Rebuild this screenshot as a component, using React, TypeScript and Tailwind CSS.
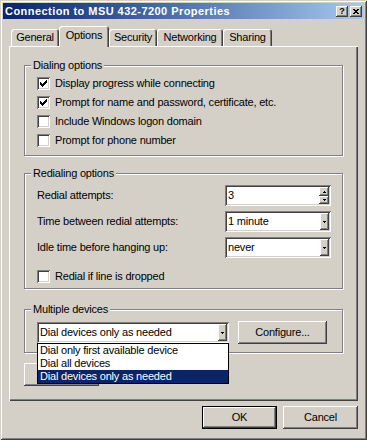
import React from 'react';

const raised =
  'shadow-[inset_-1px_-1px_#404040,inset_1px_1px_#fff,inset_-2px_-2px_#808080,inset_2px_2px_#d4d0c8]';
const sunken =
  'shadow-[inset_1px_1px_#808080,inset_-1px_-1px_#fff,inset_2px_2px_#404040,inset_-2px_-2px_#d4d0c8]';

const Check = ({ checked }: { checked?: boolean }) => (
  <div className={`w-[13px] h-[13px] shrink-0 bg-white flex items-center justify-center ${sunken}`}>
    {checked && (
      <svg width="7" height="7" viewBox="0 0 7 7" shapeRendering="crispEdges">
        <path
          fill="#000"
          d="M0 2h1v3H0z M1 3h1v3H1z M2 4h1v3H2z M3 3h1v3H3z M4 2h1v3H4z M5 1h1v3H5z M6 0h1v3H6z"
        />
      </svg>
    )}
  </div>
);

const CheckRow = ({ label, checked }: { label: string; checked?: boolean }) => (
  <div className="flex items-center h-[19px] pl-[12px]">
    <Check checked={checked} />
    <span className="ml-[5px] whitespace-nowrap">{label}</span>
  </div>
);

const DownArrow = () => (
  <svg width="3" height="2" viewBox="0 0 3 2" shapeRendering="crispEdges">
    <path fill="#000" d="M0 0h3v1H0z M1 1h1v1H1z" />
  </svg>
);

const UpArrow = () => (
  <svg width="3" height="2" viewBox="0 0 3 2" shapeRendering="crispEdges">
    <path fill="#000" d="M1 0h1v1H1z M0 1h3v1H0z" />
  </svg>
);

const Combo = ({ value, className = '' }: { value: string; className?: string }) => (
  <div className={`h-[21px] bg-white flex items-center pl-[3px] pr-[2px] ${sunken} ${className}`}>
    <span className="flex-1 whitespace-nowrap">{value}</span>
    <div className={`w-[9px] h-[17px] bg-[#d4d0c8] flex items-center justify-center ${raised}`}>
      <DownArrow />
    </div>
  </div>
);

const Group = ({
  label,
  className = '',
  children,
}: {
  label: string;
  className?: string;
  children: React.ReactNode;
}) => (
  <div className={`w-[319px] border border-[#808080] shadow-[inset_1px_1px_#fff,1px_1px_#fff] ${className}`}>
    <div className="-mt-[7px] ml-[6px] px-[2px] w-fit bg-[#d4d0c8] whitespace-nowrap">{label}</div>
    {children}
  </div>
);

const Button = ({ children, isDefault }: { children?: React.ReactNode; isDefault?: boolean }) =>
  isDefault ? (
    <div className="w-[75px] h-[23px] border border-black">
      <div className="w-full h-full flex items-center justify-center shadow-[inset_-1px_-1px_#404040,inset_1px_1px_#fff,inset_-2px_-2px_#808080]">
        {children}
      </div>
    </div>
  ) : (
    <div className={`w-[75px] h-[23px] flex items-center justify-center ${raised}`}>{children}</div>
  );

export default function App() {
  return (
    <div className="w-[367px] h-[440px] overflow-hidden bg-[#d4d0c8] p-[3px] text-[11px] leading-[13px] text-black font-['Liberation_Sans',Arial,sans-serif] tracking-[-0.2px] shadow-[inset_1px_1px_#d4d0c8,inset_-1px_-1px_#404040,inset_2px_2px_#fff,inset_-2px_-2px_#808080]">
      {/* title bar */}
      <div className="h-[16px] flex items-center bg-linear-to-r from-[#0a246a] to-[#a6caf0] pl-[2px] pr-[2px]">
        <span className="flex-1 text-white font-bold tracking-[0.45px] whitespace-nowrap">
          Connection to MSU 432-7200 Properties
        </span>
        <div className="flex gap-[2px]">
          <div className={`w-[12px] h-[11px] bg-[#d4d0c8] flex items-center justify-center ${raised}`}>
            <span className="font-bold text-[9px] leading-[9px] tracking-normal">?</span>
          </div>
          <div className={`w-[12px] h-[11px] bg-[#d4d0c8] flex items-center justify-center ${raised}`}>
            <svg width="6" height="5" viewBox="0 0 6 5" shapeRendering="crispEdges">
              <path
                fill="#000"
                d="M0 0h2v1H0z M4 0h2v1H4z M1 1h2v1H1z M3 1h2v1H3z M2 2h2v1H2z M1 3h2v1H1z M3 3h2v1H3z M0 4h2v1H0z M4 4h2v1H4z"
              />
            </svg>
          </div>
        </div>
      </div>

      <div className="mx-[6px]">
        {/* tabs */}
        <div className="flex items-end h-[20px] mt-[7px] pl-[2px]">
          <div className="w-[48px] h-[17px] flex items-center justify-center rounded-t-[3px] shadow-[inset_1px_1px_#fff,inset_-1px_0_#404040,inset_-2px_0_#808080]">
            General
          </div>
          <div className="relative z-10 -mb-px w-[50px] h-[21px] pb-[2px] flex items-center justify-center bg-[#d4d0c8] rounded-t-[3px] shadow-[inset_1px_1px_#fff,inset_-1px_0_#404040,inset_-2px_0_#808080]">
            Options
          </div>
          <div className="w-[48px] h-[17px] flex items-center justify-center rounded-t-[3px] shadow-[inset_1px_1px_#fff,inset_-1px_0_#404040,inset_-2px_0_#808080]">
            Security
          </div>
          <div className="w-[66px] h-[17px] flex items-center justify-center rounded-t-[3px] shadow-[inset_1px_1px_#fff,inset_-1px_0_#404040,inset_-2px_0_#808080]">
            Networking
          </div>
          <div className="w-[49px] h-[17px] flex items-center justify-center rounded-t-[3px] shadow-[inset_1px_1px_#fff,inset_-1px_0_#404040,inset_-2px_0_#808080]">
            Sharing
          </div>
        </div>

        {/* panel */}
        <div className="h-[355px] pt-[19px] pl-[15px] shadow-[inset_1px_1px_#fff,inset_-1px_-1px_#404040,inset_-2px_-2px_#808080]">
          <Group label="Dialing options" className="pb-[5px]">
            <div className="mt-[2px]">
              <CheckRow checked label="Display progress while connecting" />
              <CheckRow checked label="Prompt for name and password, certificate, etc." />
              <CheckRow label="Include Windows logon domain" />
              <CheckRow label="Prompt for phone number" />
            </div>
          </Group>

          <Group label="Redialing options" className="mt-[17px] pb-[5px]">
            <div className="mt-[5px] flex flex-col gap-[5px] pl-[12px] pr-[11px]">
              <div className="flex items-center">
                <span className="flex-1">Redial attempts:</span>
                <div className={`w-[106px] h-[21px] bg-white flex items-center pl-[3px] pr-[2px] ${sunken}`}>
                  <span className="flex-1">3</span>
                  <div className="w-[10px] h-[17px] flex flex-col">
                    <div className={`h-[9px] bg-[#d4d0c8] flex items-center justify-center ${raised}`}>
                      <UpArrow />
                    </div>
                    <div className={`h-[8px] bg-[#d4d0c8] flex items-center justify-center ${raised}`}>
                      <DownArrow />
                    </div>
                  </div>
                </div>
              </div>
              <div className="flex items-center">
                <span className="flex-1">Time between redial attempts:</span>
                <Combo value="1 minute" className="w-[106px]" />
              </div>
              <div className="flex items-center">
                <span className="flex-1">Idle time before hanging up:</span>
                <Combo value="never" className="w-[106px]" />
              </div>
            </div>
            <div className="flex items-center mt-[12px] pl-[12px]">
              <Check />
              <span className="ml-[5px]">Redial if line is dropped</span>
            </div>
          </Group>

          <Group label="Multiple devices" className="mt-[20px] pb-[8px]">
            <div className="mt-[5px] h-[23px] flex items-center pl-[12px]">
              <div className="relative">
                <Combo value="Dial devices only as needed" className="w-[192px]" />
                <div className="absolute left-0 top-full z-20 w-[192px] border border-black bg-white">
                  <div className="h-[13px] pl-[2px]">Dial only first available device</div>
                  <div className="h-[13px] pl-[2px]">Dial all devices</div>
                  <div className="h-[13px] pl-[2px] bg-[#0a246a] text-white">Dial devices only as needed</div>
                </div>
              </div>
              <div className={`ml-[9px] w-[89px] h-[23px] flex items-center justify-center ${raised}`}>
                Configure...
              </div>
            </div>
          </Group>

          <div className="mt-[10px]">
            <Button />
          </div>
        </div>

        {/* dialog buttons */}
        <div className="flex justify-end gap-[6px] mt-[5px]">
          <Button isDefault>OK</Button>
          <Button>Cancel</Button>
        </div>
      </div>
    </div>
  );
}
